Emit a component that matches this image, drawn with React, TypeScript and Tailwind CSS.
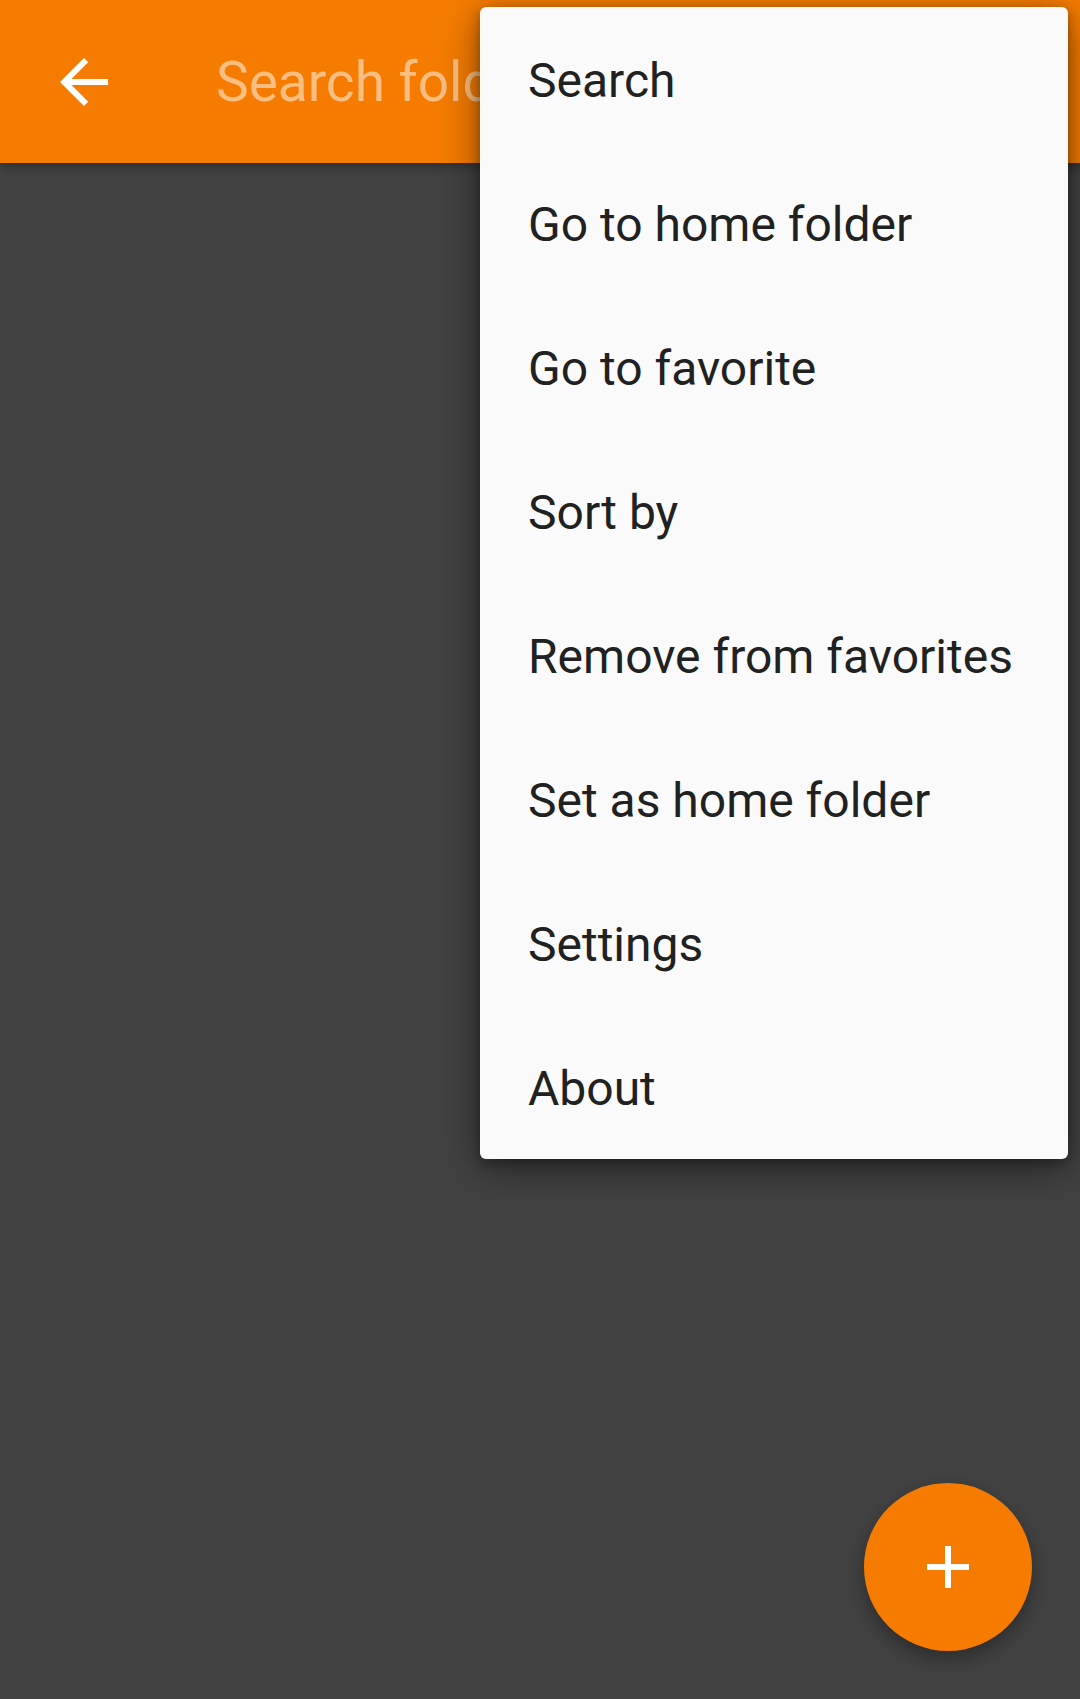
const menuItems = [
  "Search",
  "Go to home folder",
  "Go to favorite",
  "Sort by",
  "Remove from favorites",
  "Set as home folder",
  "Settings",
  "About",
];

const BackArrow = () => (
  <svg width="72" height="72" viewBox="0 0 24 24" fill="#ffffff">
    <path d="M20 11H7.83l5.59-5.59L12 4l-8 8 8 8 1.41-1.41L7.83 13H20v-2z" />
  </svg>
);

const PlusIcon = () => (
  <svg width="72" height="72" viewBox="0 0 24 24" fill="#ffffff">
    <path d="M19 13h-6v6h-2v-6H5v-2h6V5h2v6h6v2z" />
  </svg>
);

const App = () => {
  return (
    <div
      className="relative w-[1080px] h-[1699px] overflow-hidden bg-[#424242] flex flex-col"
      style={{ fontFamily: "Roboto, 'Noto Sans', sans-serif" }}
    >
      {/* toolbar with search field */}
      <header className="relative z-10 h-[163px] bg-[#f57c00] flex items-center shadow-[0_4px_10px_rgba(0,0,0,0.3)]">
        <div className="w-[168px] h-full flex items-center justify-center">
          <BackArrow />
        </div>
        <div className="pl-[48px] pt-[2px] text-[55px] text-white/50 whitespace-nowrap">
          Search folder
        </div>
      </header>

      <main className="flex-1" />

      {/* overflow menu */}
      <div className="absolute z-20 top-[7px] left-[480px] w-[588px] bg-[#fafafa] rounded-[6px] shadow-[0_10px_40px_rgba(0,0,0,0.45),0_4px_12px_rgba(0,0,0,0.3)]">
        {menuItems.map((item) => (
          <div
            key={item}
            className="h-[144px] flex items-center pl-[48px] pt-[3px] text-[48px] text-[#212121] whitespace-nowrap"
          >
            {item}
          </div>
        ))}
      </div>

      {/* floating action button */}
      <button className="absolute right-[48px] bottom-[48px] w-[168px] h-[168px] rounded-full bg-[#f57c00] flex items-center justify-center shadow-[0_8px_20px_rgba(0,0,0,0.35)]">
        <PlusIcon />
      </button>
    </div>
  );
};

export default App;
